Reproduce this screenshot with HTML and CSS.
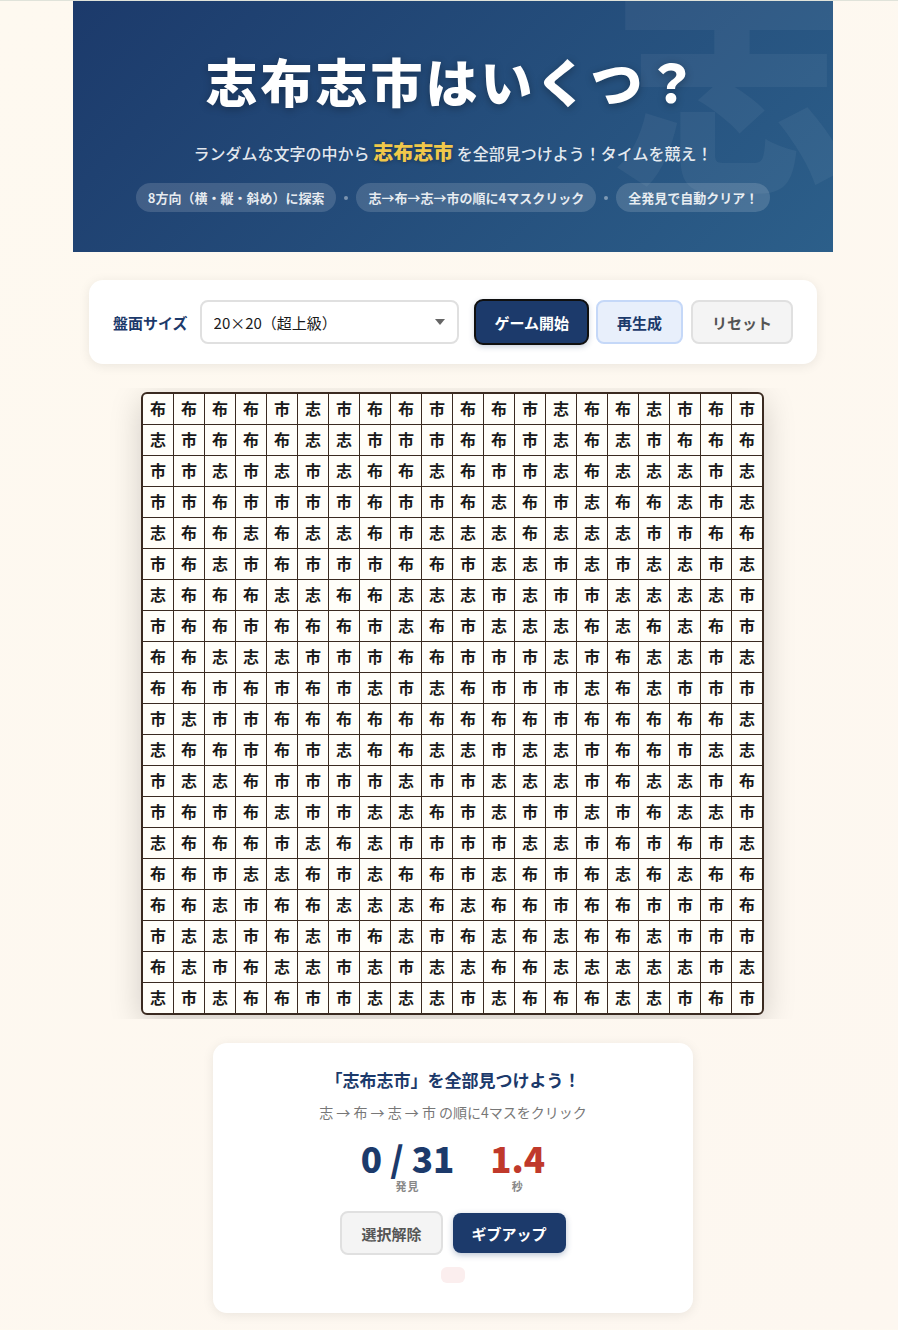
FILE: index.html
```html
<!DOCTYPE html>
<html lang="ja">
<head>
    <meta charset="UTF-8">
    <meta name="viewport" content="width=device-width, initial-scale=1">
    <title>志布志市はいくつ？</title>
    <link rel="stylesheet" href="styles.css">
</head>
<body>

<main class="page">
    <header class="hero">
        <h1>志布志市はいくつ？</h1>
        <p class="lead">ランダムな文字の中から <strong>志布志市</strong> を全部見つけよう！タイムを競え！</p>
        <div class="rules">
            <span class="rule">8方向（横・縦・斜め）に探索</span>
            <span class="dot"></span>
            <span class="rule">志→布→志→市の順に4マスクリック</span>
            <span class="dot"></span>
            <span class="rule">全発見で自動クリア！</span>
        </div>
    </header>

    <!-- 盤面サイズと操作ボタン -->
    <section class="controls">
        <label for="boardSize">盤面サイズ</label>
        <select id="boardSize">
            <option>5×5（初級）</option>
            <option>10×10（中級）</option>
            <option>15×15（上級）</option>
            <option selected>20×20（超上級）</option>
        </select>
        <div class="actions">
            <button type="button" class="btn primary active">ゲーム開始</button>
            <button type="button" class="btn soft">再生成</button>
            <button type="button" class="btn ghost">リセット</button>
        </div>
    </section>

    <div class="board-wrap">
        <div class="board" id="board"></div>
    </div>

    <!-- ゲームの状況 -->
    <section class="status">
        <h2>「志布志市」を全部見つけよう！</h2>
        <p class="hint">志 → 布 → 志 → 市 の順に4マスをクリック</p>
        <div class="stats">
            <div class="stat">
                <span class="value">0 / 31</span>
                <span class="unit">発見</span>
            </div>
            <div class="stat time">
                <span class="value">1.4</span>
                <span class="unit">秒</span>
            </div>
        </div>
        <div class="status-buttons">
            <button type="button" class="btn ghost">選択解除</button>
            <button type="button" class="btn primary">ギブアップ</button>
        </div>
        <div class="message"></div>
    </section>
</main>

<script src="script.js"></script>
</body>
</html>
```

FILE: styles.css
```css
* {
    box-sizing: border-box;
}

body {
    margin: 0;
    border-top: 1px solid #e0e3da;
    background: linear-gradient(135deg, #fef9f0, #fdf7f0);
    color: #1a1a1a;
    font-family: "Noto Sans CJK JP", "Noto Sans", sans-serif;
}

h1, h2, p {
    margin: 0;
}

.page {
    max-width: 768px;
    margin: 0 auto;
    padding: 0 0 16px 8px;
}

/* ヘッダー */
.hero {
    position: relative;
    overflow: hidden;
    padding: 40px 24px;
    background: linear-gradient(135deg, #1c3a6b, #2c5f8a);
    color: #fff;
    text-align: center;
}

.hero::before {
    content: "志";
    position: absolute;
    top: -50px;
    right: -20px;
    color: rgba(255, 255, 255, 0.05);
    font-size: 240px;
    font-weight: 900;
    line-height: 1;
}

.hero h1 {
    position: relative;
    font-size: 52px;
    font-weight: 900;
    line-height: 80px;
    letter-spacing: 3px;
    text-shadow: 0 2px 8px rgba(0, 0, 0, 0.3);
}

.lead {
    position: relative;
    margin: 14px 0 13px;
    color: rgba(255, 255, 255, 0.88);
    font-size: 16px;
    font-weight: 500;
    line-height: 34px;
}

.lead strong {
    color: #f0c84a;
    font-size: 20px;
    font-weight: 900;
    text-shadow: 0 1px 4px rgba(0, 0, 0, 0.3);
}

.rules {
    position: relative;
    display: flex;
    flex-wrap: wrap;
    justify-content: center;
    align-items: center;
    gap: 8px;
}

.rule {
    padding: 4px 12px;
    border-radius: 20px;
    background: rgba(255, 255, 255, 0.15);
    color: rgba(255, 255, 255, 0.88);
    font-size: 13px;
    font-weight: 600;
    line-height: 21px;
}

.dot {
    width: 4px;
    height: 4px;
    border-radius: 50%;
    background: rgba(255, 255, 255, 0.4);
}

/* 操作パネル */
.controls {
    display: flex;
    align-items: center;
    margin: 28px 16px 24px;
    padding: 20px 24px;
    border-radius: 14px;
    background: #fff;
    box-shadow: 0 2px 12px rgba(0, 0, 0, 0.08);
}

.controls label {
    margin-right: 12px;
    color: #1c3a6b;
    font-size: 15px;
    font-weight: 700;
}

.controls select {
    flex: 1;
    min-width: 0;
    height: 44px;
    margin-right: 16px;
    padding: 0 12px;
    border: 2px solid #e0e0e0;
    border-radius: 8px;
    appearance: none;
    background: #fff url("data:image/svg+xml,%3Csvg xmlns='http://www.w3.org/2000/svg' width='10' height='6'%3E%3Cpath d='M0 0h10L5 6z' fill='%23666'/%3E%3C/svg%3E") no-repeat right 12px center;
    color: #1a1a1a;
    font-family: inherit;
    font-size: 15px;
}

.actions {
    display: flex;
    gap: 8px;
}

.btn {
    padding: 9px 19px 7px;
    border: none;
    border-radius: 8px;
    font-family: inherit;
    font-size: 15px;
    font-weight: 700;
    line-height: 24px;
    cursor: pointer;
}

.primary {
    background: #1c3a6b;
    color: #fff;
    box-shadow: 0 2px 6px rgba(28, 58, 107, 0.3);
}

.active {
    outline: 2px solid #101010;
    outline-offset: -1px;
}

.soft {
    border: 2px solid #c5d8f8;
    background: #e8effb;
    color: #1c3a6b;
}

.ghost {
    border: 2px solid #e0e0e0;
    background: #f4f4f4;
    color: #555;
}

/* 盤面 */
.board-wrap {
    display: flex;
    justify-content: center;
    overflow: hidden;
    margin: 0 17px 24px 16px;
    padding: 4px 0;
}

.board {
    display: grid;
    grid-template-columns: repeat(20, 30px);
    grid-auto-rows: 30px;
    gap: 1px;
    overflow: hidden;
    border: 2px solid #3a2a20;
    border-radius: 6px;
    background: #3a2a20;
    box-shadow: 0 8px 32px rgba(0, 0, 0, 0.18);
}

.cell {
    padding: 0 0 2px;
    border: none;
    background: #fffef9;
    color: #1a1a1a;
    font-family: inherit;
    font-size: 16px;
    font-weight: 700;
    line-height: 28px;
    cursor: pointer;
}

/* 状況パネル */
.status {
    display: flex;
    flex-direction: column;
    align-items: center;
    max-width: 480px;
    margin: 0 auto;
    padding: 24px 24px 30px;
    border-radius: 14px;
    background: #fff;
    box-shadow: 0 2px 12px rgba(0, 0, 0, 0.08);
    text-align: center;
}

.status h2 {
    color: #1c3a6b;
    font-size: 17px;
    font-weight: 700;
    line-height: 26px;
}

.hint {
    margin: 8px 0 16px;
    color: #777;
    font-size: 14px;
    line-height: 22px;
}

.stats {
    display: flex;
    gap: 36px;
    margin-bottom: 16px;
}

.stat {
    display: flex;
    flex-direction: column;
    align-items: center;
    color: #1c3a6b;
}

.time {
    color: #c0392b;
}

.value {
    font-size: 35px;
    font-weight: 900;
    line-height: 38px;
}

.unit {
    color: #888;
    font-size: 11px;
    font-weight: 700;
    line-height: 18px;
    letter-spacing: 1px;
}

.status-buttons {
    display: flex;
    align-items: center;
    gap: 10px;
    margin-bottom: 12px;
}

.message {
    min-height: 16px;
    padding: 8px 12px;
    border-radius: 6px;
    background: #fbeeee;
}
```

FILE: script.js
```js
const rows = [
    "布布布布市志市布布市布布市志布布志市布市",
    "志市布布布志志市市市布布市志布志市布布布",
    "市市志市志市志布布志布市市志布志志志市志",
    "市市布市市市市布市市布志布市志布布志市志",
    "志布布志布志志布市志志志布志志志市市布布",
    "市布志市布市市市布布市志志市志市志志市志",
    "志布布布志志布布志志志市志市市志志志志市",
    "市布布市布布布市志布市志志志布志布志布市",
    "布布志志志市市市布布市市市志市布志志市志",
    "布布市布市布市志市志布市市市志布志市市市",
    "市志市市布布布布布布布布布市布布布布布志",
    "志布布市布市志布布志志市志志市布布市志志",
    "市志志布市市市市志市市志志志市布志志市布",
    "市布市布志市市志志布市志市市志市布志志市",
    "志布布布市志布志市市市市志志市布市布市志",
    "布布市志志布市志布布市志布市布志布志布布",
    "布布志市布布志志志布志布布市布布市市市布",
    "市志志市布志市布志市布志布志布布志市市市",
    "布志市布志志市志市志志布布志志志志志市志",
    "志市志布布市市志志志市志布布布志志市布市"
];

const board = document.getElementById("board");

// 1文字ずつマスを作る
rows.forEach(row => {
    [...row].forEach(char => {
        const cell = document.createElement("button");
        cell.type = "button";
        cell.className = "cell";
        cell.textContent = char;
        board.appendChild(cell);
    });
});
```
